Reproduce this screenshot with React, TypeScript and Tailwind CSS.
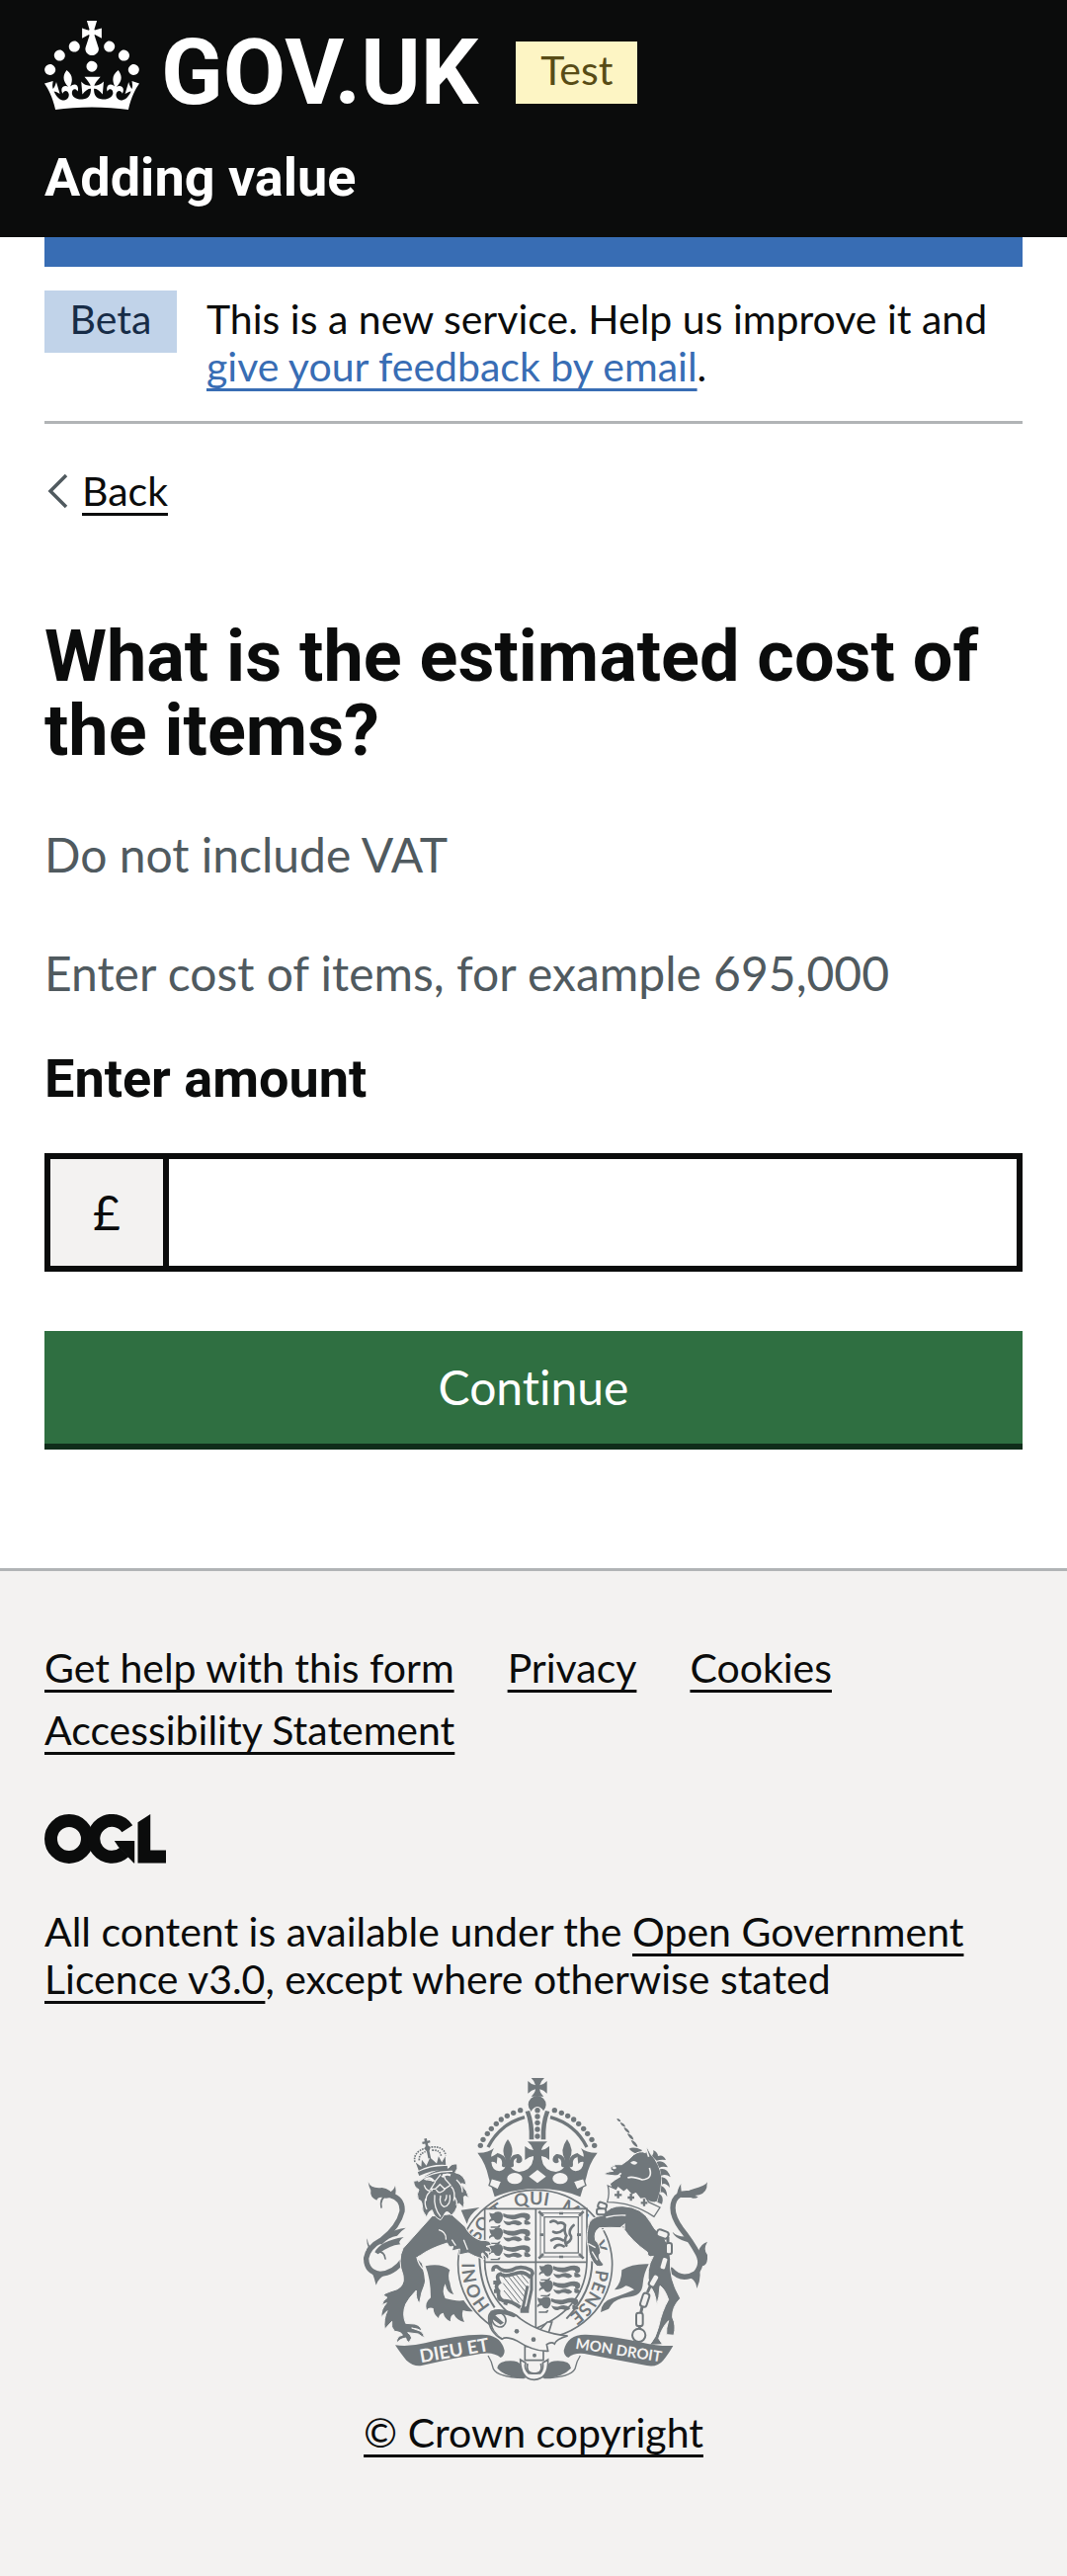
import type { ReactNode } from 'react';

const INK = '#70777b';
const PAPER = '#f3f2f1';

const underline =
  'underline decoration-[3px] underline-offset-[7px] [text-decoration-skip-ink:none]';

function CrownLogo() {
  return (
    <svg viewBox="0 0 32 30" className="h-[90px] w-24 shrink-0" fill="currentColor" aria-hidden="true">
      <path d="M22.6 10.4c-1 .4-2-.1-2.4-1-.4-.9.1-2 1-2.4.9-.4 2 .1 2.4 1s-.1 2-1 2.4m-5.9 6.7c-.9.4-2-.1-2.4-1-.4-.9.1-2 1-2.4.9-.4 2 .1 2.4 1s-.1 2-1 2.4m10.8-3.7c-1 .4-2-.1-2.4-1-.4-.9.1-2 1-2.4.9-.4 2 .1 2.4 1s0 2-1 2.4m3.3 4.8c-1 .4-2-.1-2.4-1-.4-.9.1-2 1-2.4.9-.4 2 .1 2.4 1s-.1 2-1 2.4M17 4.7l2.3 1.2V2.5l-2.3.7-.2-.2.9-3h-3.4l.9 3-.2.2c-.1.1-2.3-.7-2.3-.7v3.4L15 4.7c.1.1.1.2.2.2l-1.3 4c-.1.2-.1.4-.1.6 0 1.1.8 2 1.9 2.2h.7c1-.2 1.9-1.1 1.9-2.1 0-.2 0-.4-.1-.6l-1.3-4c-.1-.2 0-.2.1-.3m-7.6 5.7c.9.4 2-.1 2.4-1 .4-.9-.1-2-1-2.4-.9-.4-2 .1-2.4 1s0 2 1 2.4m-5 3c.9.4 2-.1 2.4-1 .4-.9-.1-2-1-2.4-.9-.4-2 .1-2.4 1s.1 2 1 2.4m-3.2 4.8c.9.4 2-.1 2.4-1 .4-.9-.1-2-1-2.4-.9-.4-2 .1-2.4 1s0 2 1 2.4m14.8 11c4.4 0 8.6.3 12.3.8 1.1-4.5 2.4-7 3.7-8.8l-2.5-.9c.2 1.3.3 1.9 0 2.7-.4-.4-.8-1.1-1.1-2.3l-1.2 4c.7-.5 1.3-.8 2-.9-1.1 2.5-2.6 3.1-3.5 3-1.1-.2-1.7-1.2-1.5-2.1.3-1.2 1.5-1.5 2.1-.1 1.1-2.3-.8-3-2-2.3 1.9-1.9 2.1-3.5.6-5.6-2.1 1.6-2.1 3.2-1.2 5.5-1.2-1.4-3.2-.6-2.5 1.6.9-1.4 2.1-.5 1.9.8-.2 1.1-1.7 2.1-3.5 1.9-2.7-.2-2.9-2.1-2.9-3.6.7-.1 1.9.5 2.9 1.9l.4-4.3c-1.1 1.1-2.1 1.4-3.2 1.4.4-1.2 2.1-3 2.1-3h-5.4s1.7 1.9 2.1 3c-1.1 0-2.1-.2-3.2-1.4l.4 4.3c1-1.4 2.2-2 2.9-1.9-.1 1.5-.2 3.4-2.9 3.6-1.9.2-3.4-.8-3.5-1.9-.2-1.3 1-2.2 1.9-.8.7-2.3-1.2-3-2.5-1.6.9-2.2.9-3.9-1.2-5.5-1.5 2-1.3 3.7.6 5.6-1.2-.7-3.1 0-2 2.3.6-1.4 1.8-1.1 2.1.1.2.9-.3 1.9-1.5 2.1-.9.2-2.4-.5-3.5-3 .6 0 1.2.3 2 .9l-1.2-4c-.3 1.1-.7 1.9-1.1 2.3-.3-.8-.2-1.4 0-2.7l-2.9.9C1.3 23 2.6 25.5 3.7 30c3.7-.5 7.9-.8 12.3-.8" />
    </svg>
  );
}

function LicenceLogo() {
  return (
    <svg viewBox="0 0 483 196" className="h-[50px] w-[123px]" fill="none" stroke="#0b0c0c" role="img" aria-label="Open Government Licence">
      <circle cx="98" cy="98" r="72.5" strokeWidth="50.7" />
      <path d="M329 58A72.5 72.5 0 1 0 317 151" strokeWidth="50.7" />
      <path d="M278 106h80v88h-3l-62-66z" fill="#0b0c0c" stroke="none" />
      <path d="M371 32L421 0V143H483V194H371z" fill="#0b0c0c" stroke="none" />
    </svg>
  );
}

const pearls = [
  [439, 274], [447, 256], [460, 238], [472, 223], [487, 208], [502, 195], [520, 184], [539, 175], [560, 167],
];

function HalfCrown() {
  return (
    <g>
      {pearls.map(([x, y]) => (
        <circle key={x} cx={x} cy={y} r="8" />
      ))}
      <path d="M462 279Q497 209 573 188" fill="none" stroke={INK} strokeWidth="10" />
      <path d="M575 171l13-3q15 40 13 88h-14q2-50-12-85z" />
      <path d="M430 296Q462 297 480 282Q470 300 472 308Q484 302 492 296L488 330Q482 322 472 324Q474 350 496 352Q514 348 516 334H530Q532 350 556 354Q590 352 600 318H612V405Q540 405 482 430L464 372Q456 330 430 296z" />
      <path d="M522 255Q498 288 516 316H528Q546 288 522 255z" />
      <path d="M510 334Q514 310 494 304M534 334Q530 308 552 306" fill="none" stroke={INK} strokeWidth="12" strokeLinecap="round" />
      <path d="M514 306h16v38h-16z" />
      <path d="M552 300q16 4 13 22q-8 10-18 2" />
      <ellipse cx="543" cy="374" rx="23" ry="17" fill={PAPER} />
      <path d="M472 374l31 9-11 25-27-13z" fill={PAPER} stroke={INK} strokeWidth="4" />
    </g>
  );
}

function PassantLion({ x, y }: { x: number; y: number }) {
  return (
    <g transform={`translate(${x} ${y})`}>
      <path d="M0 2q12 6 18-2q16-4 22 6q4 16-8 28q-14 4-18-8q-8-2-14 6q-4-8 6-12q-6-8-6-18z" />
      <path d="M42 4q22 8 42 2q28-8 38 2q6 12-6 18q-8 0-8-8q-10-4-22 2q-20 8-44-6z" />
      <path d="M42 26q14 6 24 2q20-8 34 6q-4 8-16 6q-12-6-22 0q-14 2-20-14zM106 24q12 0 20 10q-8 8-20 2z" />
      <path d="M4 44h20q6-6 10-4l-4 8H4z" />
    </g>
  );
}

function Shield() {
  return (
    <g>
      <path d="M452 466H762V625Q760 768 605 830Q455 768 452 625z" fill={PAPER} stroke={INK} strokeWidth="5" />
      <path d="M607 466V828M452 628H762" fill="none" stroke={INK} strokeWidth="5" />
      {[[466, 476], [466, 525], [466, 574], [618, 636], [618, 684], [612, 734]].map(([x, y]) => (
        <PassantLion key={`${x}-${y}`} x={x} y={y} />
      ))}
      <g fill="none" stroke={INK}>
        <rect x="621" y="479" width="126" height="133" strokeWidth="3" />
        <rect x="633" y="491" width="103" height="109" strokeWidth="4" />
        <path d="M678 480h12M678 612h12M620 545h10M732 545h12M616 474l14 14M752 474l-14 14M616 617l14-14M752 617l-14-14" strokeWidth="8" />
        <path d="M652 506q12-8 22 4q14-6 22 6q-4 20 4 32q-8 14 0 30M660 536q14 8 30-6M654 562q18-12 36 0M664 584q10-14 28-4M702 570q20-12 8-28q-2-14 12-26" strokeWidth="8" strokeLinecap="round" />
        <path d="M478 656Q474 640 490 642Q508 660 534 652Q560 636 592 652Q604 664 588 672Q570 652 540 664Q512 674 500 664Q484 668 496 690Q480 700 494 716Q490 740 510 746Q530 744 560 766" strokeWidth="11" />
        <path d="M478 690h12M480 716h12M492 742l10-8M514 758l4-12" strokeWidth="12" />
        <path d="M594 670V712L580 776M582 700L566 776" strokeWidth="9" />
        <path d="M518 664l58 74M508 672l60 76M530 662l50 62M508 692l48 60M544 662l38 46M510 714l30 36M558 660l26 32" strokeWidth="3" />
      </g>
      <path d="M560 768l26-8v22h-26z" />
    </g>
  );
}

function Lion() {
  return (
    <g>
      <path d="M380 470L436 462Q404 484 398 512z" />
      <g fill="none" stroke={INK} strokeLinecap="round">
        <path d="M204 622Q176 662 134 664Q92 658 92 616Q98 582 140 560Q190 520 201 474Q204 436 166 425" strokeWidth="16" />
        <path d="M160 424Q132 430 138 462M124 596Q148 594 150 618" strokeWidth="5" />
      </g>
      <path d="M98 385Q106 406 140 402Q166 406 180 430L152 434Q128 426 124 440Q102 430 106 410Q100 400 98 385zM180 396Q184 410 180 430L160 418Q176 412 180 396z" />
      <path d="M95 556Q98 578 110 588L92 612Q88 590 98 582Q92 568 95 556zM118 598Q134 564 206 552Q186 566 196 574Q160 578 128 604zM132 574Q150 532 212 524Q196 534 186 548Q160 552 140 574zM108 654Q118 680 122 698Q128 676 160 660z" />
      <path
        d="M292 488L204 586Q186 622 204 668Q212 708 168 716Q148 722 142 730Q150 730 156 736Q142 744 140 758L154 752Q136 772 138 794L156 776Q144 800 148 832L170 808Q166 826 178 838Q200 840 202 850Q184 852 184 874Q194 860 212 858Q212 866 222 872L230 858Q226 846 218 842L250 846Q258 852 268 858Q268 846 258 838L230 828Q252 830 260 838Q260 822 240 816L212 814Q200 786 212 756Q222 736 244 714Q242 742 254 752Q258 720 272 690Q272 660 262 632Q238 612 256 608Q286 586 338 570Q344 586 356 580L352 594L376 588L374 606L402 600Q418 610 450 620Q436 602 446 600L462 620Q470 606 454 596L470 598Q474 584 456 580L472 576Q470 560 440 562Q408 552 392 520L350 482z"
        stroke={PAPER}
        strokeWidth="3"
      />
      <path d="M272 640Q320 630 346 652Q338 670 346 690Q350 716 358 726Q338 724 332 694Q320 716 332 738Q368 748 388 744Q400 762 416 778Q394 778 386 774Q380 790 390 810Q368 806 358 786Q346 790 348 808Q330 800 326 782Q312 786 312 798Q296 786 296 768Q280 764 276 774Q268 752 288 736Q288 680 272 640z" />
      <path d="M246 612Q250 636 266 650Q280 690 262 724M312 530Q336 536 334 560M352 560l12 18M388 560l12 30" fill="none" stroke={PAPER} strokeWidth="4" />
      <path
        d="M236 382Q262 380 270 366Q310 342 342 342Q350 328 368 330Q372 344 362 356Q392 362 396 394Q378 386 380 392Q400 410 404 434Q392 424 388 430Q392 452 386 464Q374 444 370 452Q364 476 350 486Q340 470 332 478Q326 490 318 500Q298 492 292 470Q280 474 276 492Q260 474 262 454Q262 440 250 438Q244 420 252 408Q236 400 236 382z"
        stroke={PAPER}
        strokeWidth="3"
      />
      <g fill="none" stroke={PAPER} strokeWidth="4">
        <path d="M250 384Q290 350 354 352M268 376l34 6l16 -20M302 384l-14 22h14l14-14l14 14l18-12l-16-18l-6-16M268 394q6 22 26 16M304 408q10 18 28-2M286 414q-14 12-12 28M350 398q14 14 8 44M366 378q20 18 18 38M318 426q-6 26 10 34q22-4 18-36M336 424q0 14-6 18M300 424q-4 40 18 66M360 430q10 14 6 26M272 436q-4 16 4 32" />
        <path d="M272 376q16-8 24 6M322 370q10-12 26-6" strokeWidth="7" />
      </g>
      <g transform="rotate(-12 288 320)">
        <path d="M242 346Q288 334 334 346L332 358Q288 346 244 358zM246 342l-4-26l14 16l6-20l10 20l16-22l16 22l10-20l6 20l14-16l-4 26Q288 330 246 342z" />
        <path d="M240 314Q240 284 278 280M298 280Q336 284 336 314M254 312Q256 292 278 290M298 290Q322 292 322 312" fill="none" stroke={INK} strokeWidth="5" strokeDasharray="5 3" />
        <path d="M282 312V290L276 280l6-6v-8h-8v-7h8v-8h8v8h8v7h-8v8l6 6l-6 10v22z" />
      </g>
    </g>
  );
}

function Unicorn() {
  return (
    <g>
      <path d="M853 192q10 0 12 10q-10 0-12-10zM863 204q14 2 16 14q-12-2-16-14zM874 219q16 4 18 18q-14-4-18-18zM885 237q17 5 19 20q-15-4-19-20zM896 257q18 5 20 22q-15-5-20-22zM890 284q14-8 40 4q-14 22-40-4z" />
      <path
        d="M834 340Q848 328 868 332Q890 318 904 302Q924 288 940 296L944 278L956 300Q984 330 990 372Q990 410 976 444Q960 452 944 438L842 412L832 390Q846 378 864 368L816 362Q818 354 842 352Q832 350 834 340z"
        stroke={PAPER}
        strokeWidth="3"
      />
      <path d="M894 326q10-10 22 0q-8 12-22 0zM838 342q8-10 14 0q-6 8-14 0z" fill={PAPER} />
      <path d="M952 342Q964 376 930 378Q900 366 886 372M836 366q20 6 30-8M942 284l8 24" fill="none" stroke={PAPER} strokeWidth="5" />
      <path d="M960 306Q966 296 964 288Q978 296 978 306Q994 300 1002 318Q986 316 974 320zM974 324Q994 316 1008 340Q990 336 982 342zM984 346Q1006 340 1016 370Q1000 358 988 366zM990 370Q1010 372 1014 402Q1000 386 990 392zM988 396Q1006 404 1006 430Q996 412 986 416zM982 420Q998 430 990 452L976 446z" />
      <path
        d="M1018 652Q1050 688 1092 662Q1116 636 1100 604Q1080 566 1048 526Q1012 476 1028 440Q1042 414 1078 420"
        fill="none"
        stroke={INK}
        strokeWidth="16"
        strokeLinecap="round"
      />
      <path d="M1128 385Q1124 396 1086 406Q1062 412 1046 432L1078 432Q1092 438 1100 430L1090 426Q1120 424 1126 402Q1126 394 1128 385zM1048 390Q1046 404 1052 424L1036 432Q1034 410 1048 390zM1128 566Q1108 572 1100 596L1112 640Q1130 640 1128 606Q1114 590 1128 566zM1022 536Q1028 558 1086 572L1066 550Q1036 552 1022 536zM1056 672Q1092 672 1096 708Q1110 680 1104 650z" />
      <path
        d="M766 520Q770 490 812 486Q830 456 870 458Q930 460 956 508Q966 530 990 548Q1012 570 1016 620Q1010 676 1046 738Q1020 764 1022 796Q1034 820 1026 850L1004 848Q1002 830 1010 806Q990 826 980 860L992 878L952 880Q972 858 980 824Q990 776 1010 742Q998 708 984 700Q982 738 974 758Q970 716 952 700Q940 650 964 610Q946 616 946 598Q898 564 872 524Q830 522 800 524Q782 536 788 562Q802 574 804 600Q790 610 812 634Q812 644 792 640Q768 618 766 580Q758 560 766 520z"
        stroke={PAPER}
        strokeWidth="3"
      />
      <path d="M790 536Q830 524 864 524L876 514V528M820 492Q850 484 880 486M766 572l22 12M778 596l16 26" fill="none" stroke={PAPER} strokeWidth="4" />
      <path d="M868 652Q900 632 950 634Q934 664 932 694Q930 732 886 734Q850 738 836 758L828 770L804 780Q806 748 838 738Q880 724 906 712Q888 700 880 700Q864 712 846 712Q868 690 868 652z" />
      <path
        d="M826 396L850 406L856 396L874 410L884 402L900 420L912 414L926 432L940 430L950 446L984 462L966 490Q900 446 824 446Q832 420 826 396z"
        fill={PAPER}
        stroke={INK}
        strokeWidth="4"
      />
      <path d="M846 424h22M857 412v22M886 432h20M896 420v22M926 448h20M936 436v22" stroke={INK} strokeWidth="7" />
      <g fill={PAPER} stroke={INK} strokeWidth="6">
        <rect x="796" y="448" width="26" height="18" rx="7" transform="rotate(20 809 457)" />
        <rect x="792" y="466" width="28" height="18" rx="7" />
        <rect x="974" y="532" width="36" height="22" rx="9" transform="rotate(20 992 543)" />
        <rect x="1002" y="570" width="18" height="34" rx="7" />
        <rect x="986" y="612" width="20" height="40" rx="8" transform="rotate(16 996 632)" />
        <rect x="956" y="664" width="20" height="40" rx="8" transform="rotate(30 966 684)" />
        <rect x="928" y="722" width="20" height="42" rx="8" transform="rotate(18 938 743)" />
        <rect x="912" y="782" width="20" height="40" rx="7" />
        <circle cx="920" cy="850" r="20" />
      </g>
      <path d="M1008 552v20M1008 602l-6 12M984 650l-8 14M954 702l-8 18M930 764l-4 18M922 820v12" stroke={INK} strokeWidth="9" />
    </g>
  );
}

function HalfScroll() {
  return (
    <g>
      <path d="M462 912Q474 930 478 952Q492 978 572 980" fill="none" stroke={INK} strokeWidth="4" />
      <path d="M490 950Q492 928 530 928Q556 928 560 940Q566 962 576 980Q520 982 490 950z" />
    </g>
  );
}

function Ribbons() {
  return (
    <g>
      <HalfScroll />
      <g transform="matrix(-1 0 0 1 1204 0)">
        <HalfScroll />
      </g>
      <path d="M180 880Q220 886 270 874Q370 848 440 848Q500 846 512 896Q512 912 500 918Q480 900 440 906Q350 920 260 942Q236 946 214 926Q200 910 180 880z" />
      <path d="M1024 882Q980 884 930 872Q830 850 760 848Q704 846 692 896Q692 912 706 918Q726 900 766 908Q860 926 944 942Q976 948 994 926Q1008 910 1024 882z" />
      <g fill={PAPER} fontFamily="Lato, sans-serif" fontWeight="700">
        <text x="258" y="934" fontSize="56" transform="rotate(-10 258 934)">DIEU ET</text>
        <text x="726" y="890" fontSize="45" transform="rotate(9 726 890)">MON DROIT</text>
      </g>
      <g fill={PAPER} stroke={INK} strokeWidth="5">
        <path d="M574 884h56v42h-56z" />
        <path d="M608 846l34-36h14l-14 44z" />
        <path d="M464 800Q462 772 500 774Q536 776 560 800Q620 844 704 852Q668 862 664 876Q654 868 640 878L644 898Q600 900 548 866Q516 852 504 862Q464 838 464 800z" />
        <ellipse cx="495" cy="803" rx="20" ry="23" transform="rotate(-35 495 803)" />
        <path d="M560 924L576 934Q570 952 586 966H620Q632 952 628 934L644 924Q646 984 602 985Q560 984 560 924z" />
        <path d="M582 936Q576 966 602 966Q630 966 622 936" fill="none" />
      </g>
      <path d="M470 776Q500 764 552 790L540 796Q500 780 484 790L510 812L500 818L474 800Q470 840 510 862L500 858Q452 822 470 776z" />
      <circle cx="549" cy="838" r="7" />
      <circle cx="600" cy="863" r="7" />
      <circle cx="603" cy="911" r="6" />
    </g>
  );
}

const motto: [string, number][] = [
  ['HONI', 8], ['SOIT', 215], ['QUI', 372], ['MAL', 510], ['Y', 652], ['PENSE', 735],
];

function CoatOfArms() {
  return (
    <svg viewBox="72 66 1056 924" className="h-[308px] w-[352px]" fill={INK} aria-hidden="true">
      <defs>
        <path id="motto" d="M475 767A184 184 0 1 1 674 808" />
      </defs>
      <path d="M590 69h43q-12 10-14 22q11-1 22-13v38q-10-10-22-13q0 12 12 22h-38q12-10 13-22q-12 2-23 13v-38q10 11 23 13q-2-12-13-22z" />
      <circle cx="611" cy="150" r="27" />
      <path d="M594 184V168Q612 144 630 168V184z" fill={PAPER} />
      {[167, 186, 205, 225, 246].map((y) => (
        <circle key={y} cx="612" cy={y} r="8" />
      ))}
      <HalfCrown />
      <g transform="matrix(-1 0 0 1 1224 0)">
        <HalfCrown />
      </g>
      <path d="M582 262h60q-16 14-18 26q12-1 24-12v42q-10-10-24-12q0 10 4 20h-32q5-10 4-20q-14 2-26 12v-42q12 11 26 12q-4-14-18-26z" />
      <path d="M586 368l26-20 26 20-26 20z" fill={PAPER} />
      <ellipse cx="605" cy="635" rx="234" ry="226" fill={PAPER} stroke={INK} strokeWidth="5" />
      <path d="M436 610Q436 700 482 766M452 610Q452 690 500 756M778 625Q778 720 700 800" fill="none" stroke={INK} strokeWidth="6" />
      <g fontFamily="Lato, sans-serif" fontSize="54" fontWeight="700">
        {motto.map(([word, start]) => (
          <text key={word}>
            <textPath href="#motto" startOffset={start}>{word}</textPath>
          </text>
        ))}
      </g>
      <Shield />
      <Lion />
      <Unicorn />
      <Ribbons />
    </svg>
  );
}

function Tag({ className, children }: { className: string; children: ReactNode }) {
  return (
    <strong className={`shrink-0 pt-[5px] pb-2.5 text-center text-[41px] leading-[48px] font-normal ${className}`}>
      {children}
    </strong>
  );
}

function FooterLink({ children }: { children: ReactNode }) {
  return (
    <a href="#" className={underline}>
      {children}
    </a>
  );
}

export default function App() {
  return (
    <div className="min-h-screen bg-[#f3f2f1] font-[Lato,sans-serif] text-[#0b0c0c] [font-variant-ligatures:none]">
      <header className="bg-[#0b0c0c] px-[45px] pt-[21px] pb-[30px] text-white">
        <div className="flex items-center">
          <a href="#" className="flex items-center gap-[22px]" aria-label="GOV.UK">
            <CrownLogo />
            <span className="pt-4 font-[Roboto,sans-serif] text-[92px] leading-[74px] font-bold">GOV.UK</span>
          </a>
          <Tag className="mt-[15px] ml-[38px] w-[123px] bg-[#fdf5c4] text-[#584c16]">Test</Tag>
        </div>
        <a href="#" className="mt-[39px] block font-[Roboto,sans-serif] text-[54px] leading-[60px] font-bold">
          Adding value
        </a>
      </header>

      <div className="bg-white px-[45px] pb-[120px]">
        <div className="h-[30px] bg-[#386db4]" />
        <div className="flex items-start gap-[30px] border-b-[3px] border-[#b1b4b6] pt-6 pb-[31px]">
          <Tag className="w-[134px] bg-[#c1d3e9] text-[#172c47]">Beta</Tag>
          <p className="pt-[5px] text-[41px] leading-[48px]">
            This is a new service. Help us improve it and{' '}
            <a href="#" className={`text-[#386db4] ${underline}`}>
              give your feedback by email
            </a>
            .
          </p>
        </div>

        <a href="#" className="mt-11 flex w-fit items-center text-[41px] leading-[48px]">
          <svg viewBox="0 0 38 36" className="h-9 w-[38px]" fill="none" stroke="#505a5f" strokeWidth="3.5" aria-hidden="true">
            <path d="M22 2L6 18L22 34" />
          </svg>
          <span className={underline}>Back</span>
        </a>

        <main className="pt-[106px]">
          <form onSubmit={(event) => event.preventDefault()}>
            <h1 className="font-[Roboto,sans-serif] text-[72px] leading-[75px] font-bold">
              What is the estimated cost of the items?
            </h1>
            <p className="mt-[58px] text-5xl leading-[60px] text-[#505a5f]">Do not include VAT</p>
            <p id="amount-hint" className="mt-[60px] text-5xl leading-[60px] text-[#505a5f]">
              Enter cost of items, for example 695,000
            </p>
            <label htmlFor="amount" className="mt-[47px] block font-[Roboto,sans-serif] text-[54px] leading-[60px] font-bold">
              Enter amount
            </label>
            <div className="mt-[45px] flex h-[120px] border-[6px] border-[#0b0c0c]">
              <span className="flex w-[120px] shrink-0 items-center justify-center border-r-[6px] border-[#0b0c0c] bg-[#f3f2f1] text-5xl" aria-hidden="true">
                £
              </span>
              <input id="amount" type="text" inputMode="decimal" aria-describedby="amount-hint" className="min-w-0 grow bg-white px-4 text-5xl outline-none" />
            </div>
            <button type="submit" className="mt-[60px] h-[120px] w-full border-b-[6px] border-[#102d1a] bg-[#2f6f41] text-5xl text-white">
              Continue
            </button>
          </form>
        </main>
      </div>

      <footer className="border-t-[3px] border-[#b1b4b6] px-[45px] pt-[74px] pb-[119px] text-[41px] leading-[48px]">
        <ul className="flex flex-wrap gap-x-[54px] gap-y-[15px]">
          <li><FooterLink>Get help with this form</FooterLink></li>
          <li><FooterLink>Privacy</FooterLink></li>
          <li><FooterLink>Cookies</FooterLink></li>
          <li><FooterLink>Accessibility Statement</FooterLink></li>
        </ul>
        <div className="mt-[61px]">
          <LicenceLogo />
        </div>
        <p className="mt-[45px]">
          All content is available under the <FooterLink>Open Government Licence v3.0</FooterLink>, except where
          otherwise stated
        </p>
        <a href="#" className="mx-auto mt-[75px] flex w-fit flex-col items-center gap-7">
          <CoatOfArms />
          <span className={underline}>© Crown copyright</span>
        </a>
      </footer>
    </div>
  );
}
